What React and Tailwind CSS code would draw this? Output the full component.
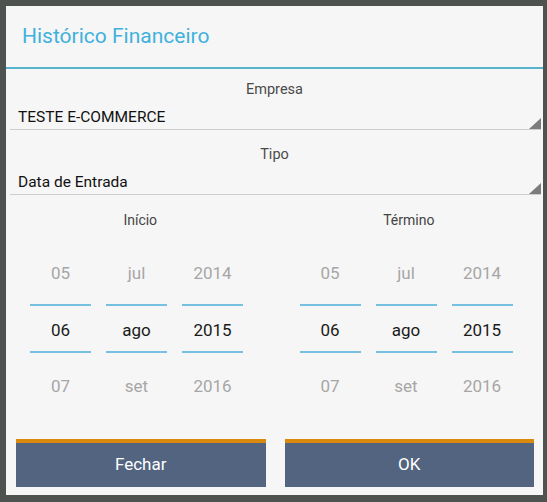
import React from "react";

function Spinner({ text }) {
  return (
    <div className="relative ml-[4px] mr-[2px] h-[24px] border-b border-[#cdcdcd] pl-[8px] text-[15.5px] leading-[22px] text-[#111]">
      {text}
      <svg className="absolute right-0 bottom-0" width="12" height="11" viewBox="0 0 12 11">
        <polygon points="12,0 12,11 0,11" fill="#7c7c7c" />
      </svg>
    </div>
  );
}

function Column({ top, mid, bot }) {
  return (
    <div className="flex w-[61px] flex-col">
      <div className="h-[74px] pt-[31px] text-center text-[17px] leading-[24px] text-[#a6a6a6]">{top}</div>
      <div className="h-[2px] bg-[#76c1e1]" />
      <div className="h-[45px] pt-[12px] text-center text-[17px] leading-[24px] text-[#1a1a1a]">{mid}</div>
      <div className="h-[2px] bg-[#76c1e1]" />
      <div className="pt-[21px] text-center text-[17px] leading-[24px] text-[#a6a6a6]">{bot}</div>
    </div>
  );
}

function Picker({ label, pl }) {
  return (
    <div className="flex flex-col">
      <div className="h-[20px] text-center text-[14px] leading-[20px] text-[#444]">{label}</div>
      <div className={`flex gap-[15px] ${pl}`}>
        <Column top="05" mid="06" bot="07" />
        <Column top="jul" mid="ago" bot="set" />
        <Column top="2014" mid="2015" bot="2016" />
      </div>
    </div>
  );
}

export default function App() {
  return (
    <div
      className="h-[502px] w-[547px] bg-[#4e534f] pt-[6px] pl-[6px] pr-[4px]"
      style={{ fontFamily: "Roboto, 'Noto Sans', sans-serif" }}
    >
      <div className="flex h-[489px] flex-col bg-[#f6f6f6]">
        <div className="flex h-[61px] items-center pl-[16px] text-[21px] text-[#3fb1dc]">Histórico Financeiro</div>
        <div className="h-[2px] bg-[#55b3cb]" />
        <div className="mt-[11px] h-[20px] text-center text-[14.5px] leading-[20px] text-[#4a4a4a]">Empresa</div>
        <div className="mt-[6px]">
          <Spinner text="TESTE E-COMMERCE" />
        </div>
        <div className="mt-[15px] h-[20px] text-center text-[14.5px] leading-[20px] text-[#4a4a4a]">Tipo</div>
        <div className="mt-[6px]">
          <Spinner text="Data de Entrada" />
        </div>
        <div className="mt-[15px] grid grid-cols-2">
          <Picker label="Início" pl="pl-[24px]" />
          <Picker label="Término" pl="pl-[25px]" />
        </div>
        <div className="mt-auto flex gap-[19px] pb-[8px] pl-[10px] pr-[9px]">
          <button className="flex h-[48px] flex-1 items-center justify-center border-t-[4px] border-[#d98a0c] bg-[#52647f] text-[17px] text-white">
            Fechar
          </button>
          <button className="flex h-[48px] flex-1 items-center justify-center border-t-[4px] border-[#d98a0c] bg-[#52647f] text-[17px] text-white">
            OK
          </button>
        </div>
      </div>
    </div>
  );
}
